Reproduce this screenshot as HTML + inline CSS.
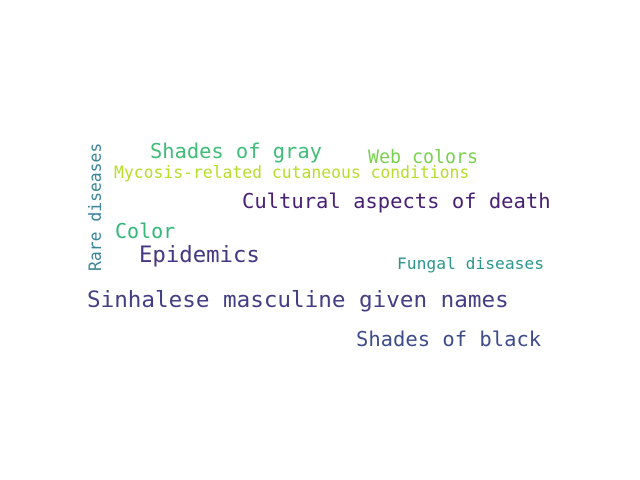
<!DOCTYPE html>
<html><head><style>
html,body{margin:0;padding:0;background:#fff;width:640px;height:480px;overflow:hidden}
text{font-family:"DejaVu Sans Mono","Liberation Mono",monospace}
</style></head><body>
<svg width="640" height="480" xmlns="http://www.w3.org/2000/svg">
<text x="150" y="158" font-size="20.4" fill="#40bd78">Shades of gray</text>
<text x="368" y="163" font-size="18.3" fill="#7ad151">Web colors</text>
<text x="114" y="178" font-size="16.4" fill="#b5de2b">Mycosis-related cutaneous conditions</text>
<text x="242" y="208" font-size="20.5" fill="#482173">Cultural aspects of death</text>
<text x="115" y="238" font-size="20" fill="#35b779">Color</text>
<text x="139" y="262" font-size="22.3" fill="#453781">Epidemics</text>
<text x="397" y="269" font-size="16.3" fill="#2a968c">Fungal diseases</text>
<text x="87" y="307" font-size="22.6" fill="#433e85">Sinhalese masculine given names</text>
<text x="356" y="346" font-size="20.5" fill="#3e4c8a">Shades of black</text>
<text transform="translate(101,271) rotate(-90)" font-size="16.4" fill="#3a8599">Rare diseases</text>
</svg>
</body></html>
